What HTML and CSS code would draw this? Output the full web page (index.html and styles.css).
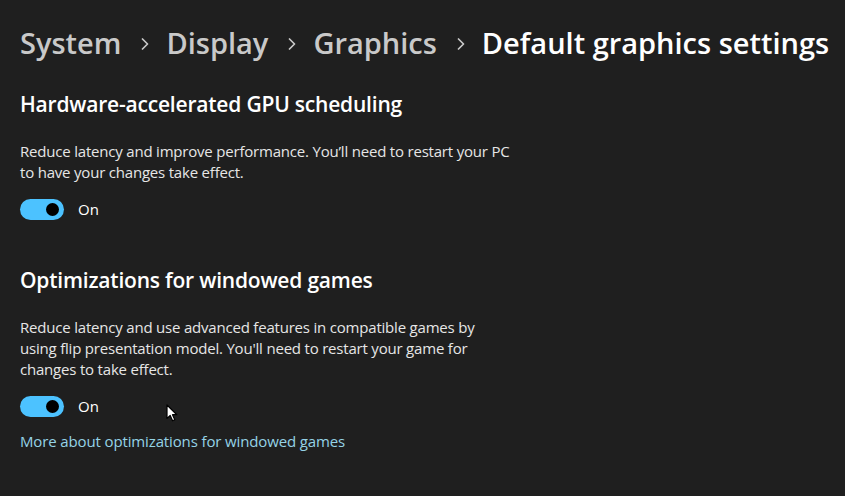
FILE: index.html
```html
<!DOCTYPE html>
<html>
<head>
<meta charset="utf-8">
<link rel="stylesheet" href="styles.css">
</head>
<body>
<div class="page">
  <nav class="crumbs">
    <span class="crumb">System</span>
    <svg class="sep" width="8" height="12" viewBox="0 0 8 12"><path d="M1.5 1 L6.5 6 L1.5 11" fill="none" stroke="#c8c8c8" stroke-width="1.7" stroke-linecap="round" stroke-linejoin="round"/></svg>
    <span class="crumb">Display</span>
    <svg class="sep" width="8" height="12" viewBox="0 0 8 12"><path d="M1.5 1 L6.5 6 L1.5 11" fill="none" stroke="#c8c8c8" stroke-width="1.7" stroke-linecap="round" stroke-linejoin="round"/></svg>
    <span class="crumb">Graphics</span>
    <svg class="sep" width="8" height="12" viewBox="0 0 8 12"><path d="M1.5 1 L6.5 6 L1.5 11" fill="none" stroke="#c8c8c8" stroke-width="1.7" stroke-linecap="round" stroke-linejoin="round"/></svg>
    <span class="crumb current">Default graphics settings</span>
  </nav>

  <section class="setting first">
    <h2 class="title">Hardware-accelerated GPU scheduling</h2>
    <p class="desc">Reduce latency and improve performance. You’ll need to restart your PC<br>to have your changes take effect.</p>
    <div class="toggle-row">
      <span class="toggle"><span class="knob"></span></span>
      <span class="state">On</span>
    </div>
  </section>

  <section class="setting second">
    <h2 class="title">Optimizations for windowed games</h2>
    <p class="desc">Reduce latency and use advanced features in compatible games by<br>using flip presentation model. You'll need to restart your game for<br>changes to take effect.</p>
    <div class="toggle-row">
      <span class="toggle"><span class="knob"></span></span>
      <span class="state">On</span>
      <svg class="cursor" width="13" height="18" viewBox="0 0 13 18"><path d="M1 1 L1 14.5 L4.2 11.5 L6.6 16.8 L8.8 15.8 L6.5 10.7 L10.8 10.7 Z" fill="#fff" stroke="#000" stroke-width="1.2" stroke-linejoin="round"/></svg>
    </div>
    <a class="link" href="#">More about optimizations for windowed games</a>
  </section>
</div>
</body>
</html>
```

FILE: styles.css
```css
html, body {
  margin: 0;
  padding: 0;
  background: #1f1f1f;
}
body {
  font-family: "Open Sans", "Noto Sans", sans-serif;
  color: #ffffff;
  width: 845px;
  height: 496px;
  overflow: hidden;
}
.page {
  padding: 23px 0 0 20px;
}
.crumbs {
  display: flex;
  align-items: center;
  font-size: 29px;
  font-weight: 600;
  line-height: 40px;
  height: 40px;
  white-space: nowrap;
}
.crumb {
  color: #c9c9c9;
}
.crumb.current {
  color: #ffffff;
}
.sep {
  margin: 1px 17px 0 20px;
  flex: none;
}
.title {
  margin: 0;
  font-size: 21px;
  font-weight: 600;
  line-height: 28px;
  letter-spacing: -0.2px;
}
.setting.first {
  margin-top: 26.5px;
}
.setting.second {
  margin-top: 46px;
}
.desc {
  margin: 23px 0 0 0;
  font-size: 15px;
  line-height: 21px;
  color: #e6e6e6;
  letter-spacing: -0.2px;
}
.toggle-row {
  position: relative;
  display: flex;
  align-items: center;
  margin-top: 16px;
  height: 21px;
}
.toggle {
  display: flex;
  align-items: center;
  justify-content: flex-end;
  box-sizing: border-box;
  width: 44px;
  height: 21px;
  border-radius: 11px;
  background: #4cc2ff;
  padding-right: 5px;
}
.knob {
  width: 13px;
  height: 13px;
  border-radius: 50%;
  background: #000;
}
.state {
  margin-left: 14px;
  font-size: 15px;
  line-height: 21px;
  color: #ffffff;
}
.cursor {
  position: absolute;
  left: 146px;
  top: 8px;
}
.link {
  display: block;
  margin-top: 14.5px;
  font-size: 15px;
  line-height: 21px;
  color: #95d3e6;
  text-decoration: none;
  letter-spacing: -0.13px;
}
```
